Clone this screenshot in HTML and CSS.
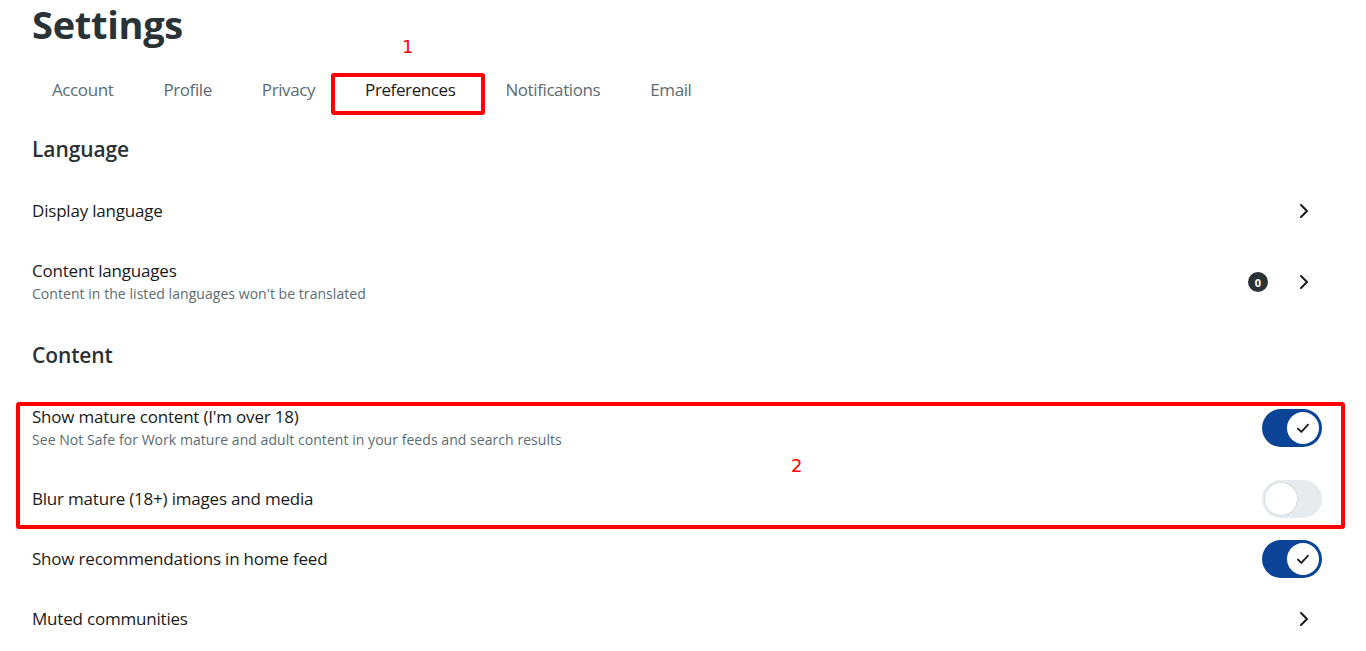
FILE: index.html
```html
<!DOCTYPE html>
<html lang="en">
<head>
  <meta charset="UTF-8" />
  <title>Settings</title>
  <link rel="stylesheet" href="styles.css">
</head>
<body>
  <main class="page">
    <h1 class="title">Settings</h1>

    <nav class="tabs">
      <a class="tab" href="#">Account</a>
      <a class="tab" href="#">Profile</a>
      <a class="tab" href="#">Privacy</a>
      <a class="tab active" href="#">Preferences
        <span class="mark mark-tab"><span class="mark-num">1</span></span>
      </a>
      <a class="tab" href="#">Notifications</a>
      <a class="tab" href="#">Email</a>
    </nav>

    <h2 class="section">Language</h2>

    <div class="row">
      <div class="label">
        <div class="name">Display language</div>
      </div>
      <div class="controls">
        <svg class="chev" viewBox="0 0 20 20"><path d="M7 4l6 6-6 6" /></svg>
      </div>
    </div>

    <div class="row tall">
      <div class="label">
        <div class="name">Content languages</div>
        <div class="sub">Content in the listed languages won't be translated</div>
      </div>
      <div class="controls">
        <span class="badge">0</span>
        <svg class="chev" viewBox="0 0 20 20"><path d="M7 4l6 6-6 6" /></svg>
      </div>
    </div>

    <h2 class="section">Content</h2>

    <div class="group">
      <div class="row tall">
        <div class="label">
          <div class="name">Show mature content (I'm over 18)</div>
          <div class="sub">See Not Safe for Work mature and adult content in your feeds and search results</div>
        </div>
        <div class="controls">
          <span class="toggle on"><span class="knob"><svg viewBox="0 0 16 16"><path d="M3.5 8.5l3 3 6-6.5" /></svg></span></span>
        </div>
      </div>
      <div class="row">
        <div class="label">
          <div class="name">Blur mature (18+) images and media</div>
        </div>
        <div class="controls">
          <span class="toggle"><span class="knob"></span></span>
        </div>
      </div>
      <span class="mark mark-group"><span class="mark-num">2</span></span>
    </div>

    <div class="row">
      <div class="label">
        <div class="name">Show recommendations in home feed</div>
      </div>
      <div class="controls">
        <span class="toggle on"><span class="knob"><svg viewBox="0 0 16 16"><path d="M3.5 8.5l3 3 6-6.5" /></svg></span></span>
      </div>
    </div>

    <div class="row">
      <div class="label">
        <div class="name">Muted communities</div>
      </div>
      <div class="controls">
        <svg class="chev" viewBox="0 0 20 20"><path d="M7 4l6 6-6 6" /></svg>
      </div>
    </div>
  </main>
</body>
</html>
```

FILE: styles.css
```css
body {
  margin: 0;
  font-family: 'Open Sans', 'Noto Sans', sans-serif;
  background-color: #ffffff;
  color: #1a1a1b;
  overflow: hidden;
}

.page {
  width: 1290px;
  padding-left: 32px;
}

.title {
  margin: 0;
  font-size: 38px;
  line-height: 48px;
  font-weight: 700;
  color: #2a3236;
  letter-spacing: -0.3px;
}

.tabs {
  display: flex;
  gap: 10px;
  margin-top: 18px;
  margin-bottom: 3px;
  height: 48px;
  align-items: center;
}

.tab {
  position: relative;
  padding: 0 20px;
  font-size: 17px;
  line-height: 24px;
  color: #5c6c74;
  text-decoration: none;
  letter-spacing: -0.4px;
}

.tab.active {
  color: #1a1a1b;
}

.section {
  margin: 0;
  height: 64px;
  display: flex;
  align-items: center;
  font-size: 21px;
  font-weight: 600;
  color: #2a3236;
  letter-spacing: -0.1px;
}

.row {
  display: flex;
  align-items: center;
  justify-content: space-between;
  min-height: 60px;
}

.row.tall {
  min-height: 82px;
}

.name {
  font-size: 17px;
  line-height: 22px;
  color: #1a1a1b;
  letter-spacing: -0.2px;
}

.sub {
  margin-top: 2px;
  font-size: 14px;
  line-height: 20px;
  color: #5c6c74;
  letter-spacing: 0.05px;
}

.controls {
  display: flex;
  align-items: center;
  gap: 26px;
  padding-right: 8px;
}

.chev {
  width: 20px;
  height: 20px;
  fill: none;
  stroke: #1a1a1b;
  stroke-width: 2;
  stroke-linecap: round;
  stroke-linejoin: round;
}

.badge {
  width: 20px;
  height: 20px;
  border-radius: 50%;
  background-color: #2a3236;
  color: #ffffff;
  font-size: 11px;
  font-weight: 700;
  display: flex;
  align-items: center;
  justify-content: center;
}

.toggle {
  width: 60px;
  height: 38px;
  border-radius: 19px;
  background-color: #e5ebee;
  display: flex;
  align-items: center;
  padding: 0 3px;
  box-sizing: border-box;
  margin-right: -8px;
}

.toggle .knob {
  width: 32px;
  height: 32px;
  border-radius: 50%;
  background-color: #ffffff;
  box-shadow: 0 0 0 1px #d6dee2;
  display: flex;
  align-items: center;
  justify-content: center;
}

.toggle.on {
  background-color: #0b4396;
  justify-content: flex-end;
}

.toggle.on .knob {
  box-shadow: none;
}

.knob svg {
  width: 18px;
  height: 18px;
  fill: none;
  stroke: #1a1a1b;
  stroke-width: 1.6;
  stroke-linecap: round;
  stroke-linejoin: round;
}

.group {
  position: relative;
}

.mark {
  position: absolute;
  border: 4px solid #ff0000;
  border-radius: 3px;
  pointer-events: none;
}

.mark-tab {
  left: -14px;
  right: -10px;
  top: -5px;
  bottom: -13px;
}

.mark-tab .mark-num {
  top: -40px;
  left: 67px;
}

.mark-group {
  left: -16px;
  right: -23px;
  top: 15px;
  bottom: 0;
}

.mark-num {
  position: absolute;
  color: #ff0000;
  font-family: 'DejaVu Sans', sans-serif;
  font-size: 18px;
  line-height: 20px;
}

.mark-group .mark-num {
  top: 50px;
  left: 771px;
}
```
